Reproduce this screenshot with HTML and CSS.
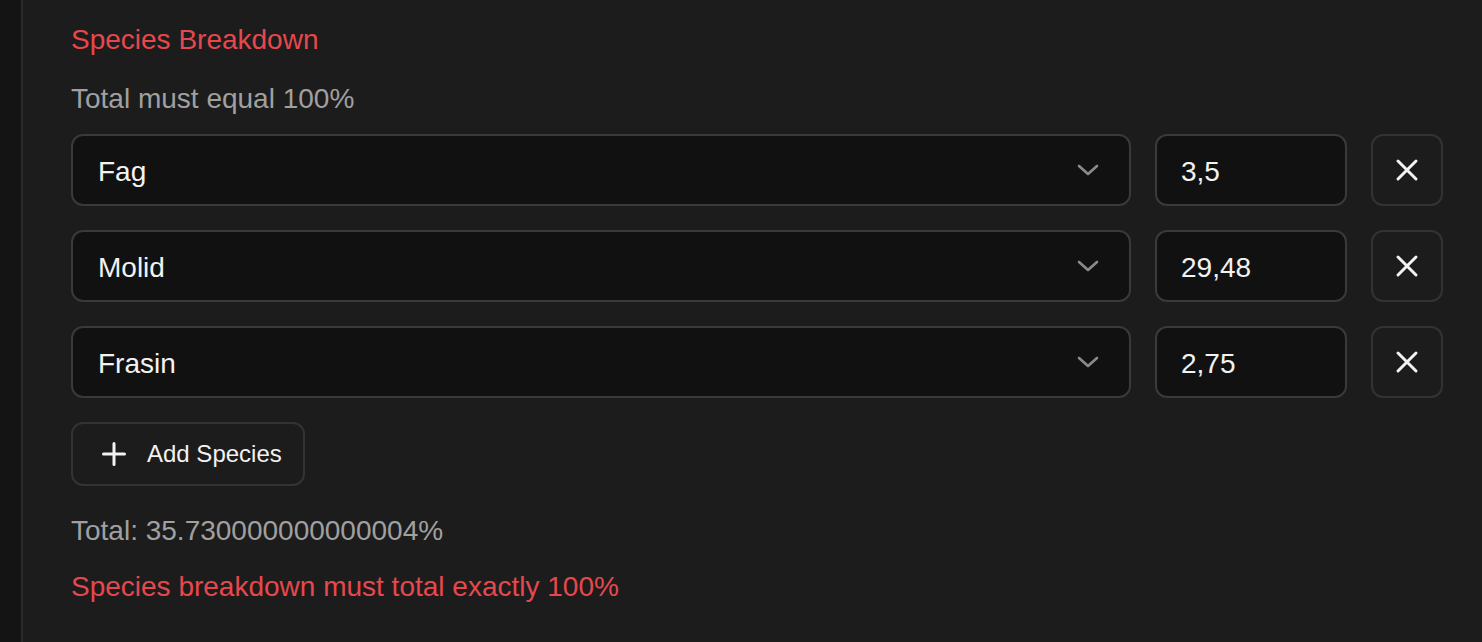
FILE: index.html
```html
<!DOCTYPE html>
<html lang="en">
<head>
<meta charset="utf-8">
<title>Species Breakdown</title>
<link rel="stylesheet" href="styles.css">
</head>
<body>
<div class="layout">
  <aside class="rail"></aside>
  <main class="panel">
    <h2 class="title">Species Breakdown</h2>
    <p class="hint">Total must equal 100%</p>
    <div class="rows">
      <div class="row">
        <div class="select"><span>Fag</span>
          <svg class="chev" width="22" height="12" viewBox="0 0 22 12"><path d="M2 2 L11 10 L20 2" fill="none" stroke="currentColor" stroke-width="2.6" stroke-linecap="round" stroke-linejoin="round"/></svg>
        </div>
        <div class="num">3,5</div>
        <button class="remove" type="button"><svg width="24" height="24" viewBox="0 0 24 24"><path d="M3 3 L21 21 M21 3 L3 21" fill="none" stroke="currentColor" stroke-width="3" stroke-linecap="round"/></svg></button>
      </div>
      <div class="row">
        <div class="select"><span>Molid</span>
          <svg class="chev" width="22" height="12" viewBox="0 0 22 12"><path d="M2 2 L11 10 L20 2" fill="none" stroke="currentColor" stroke-width="2.6" stroke-linecap="round" stroke-linejoin="round"/></svg>
        </div>
        <div class="num">29,48</div>
        <button class="remove" type="button"><svg width="24" height="24" viewBox="0 0 24 24"><path d="M3 3 L21 21 M21 3 L3 21" fill="none" stroke="currentColor" stroke-width="3" stroke-linecap="round"/></svg></button>
      </div>
      <div class="row">
        <div class="select"><span>Frasin</span>
          <svg class="chev" width="22" height="12" viewBox="0 0 22 12"><path d="M2 2 L11 10 L20 2" fill="none" stroke="currentColor" stroke-width="2.6" stroke-linecap="round" stroke-linejoin="round"/></svg>
        </div>
        <div class="num">2,75</div>
        <button class="remove" type="button"><svg width="24" height="24" viewBox="0 0 24 24"><path d="M3 3 L21 21 M21 3 L3 21" fill="none" stroke="currentColor" stroke-width="3" stroke-linecap="round"/></svg></button>
      </div>
    </div>
    <button class="add" type="button">
      <svg width="24" height="24" viewBox="0 0 24 24"><path d="M12 1.5 V22.5 M1.5 12 H22.5" fill="none" stroke="currentColor" stroke-width="3" stroke-linecap="round"/></svg>
      <span>Add Species</span>
    </button>
    <p class="total">Total: 35.730000000000004%</p>
    <p class="error">Species breakdown must total exactly 100%</p>
  </main>
</div>
</body>
</html>
```
FILE: styles.css
```css
* { box-sizing: border-box; }
html, body {
  margin: 0;
  height: 100%;
  background: #1c1c1c;
  font-family: "Liberation Sans", Arial, Helvetica, sans-serif;
  overflow: hidden;
}
.layout {
  display: flex;
  height: 100%;
}
.rail {
  width: 23px;
  flex: 0 0 23px;
  background: #141414;
  border-right: 2px solid #2a2a2a;
}
.panel {
  flex: 1;
  padding: 20px 39px 0 48px;
}
.title {
  margin: 0;
  font-size: 28px;
  line-height: 40px;
  font-weight: 400;
  color: #e5484d;
}
.hint {
  margin: 19px 0 0;
  font-size: 28px;
  line-height: 40px;
  color: #a0a0a0;
}
.rows {
  margin-top: 15px;
  display: flex;
  flex-direction: column;
  gap: 24px;
}
.row {
  display: grid;
  grid-template-columns: 1fr 192px 72px;
  gap: 24px;
  height: 72px;
}
.select, .num {
  display: flex;
  align-items: center;
  background: #111111;
  border: 2px solid #3a3a3a;
  border-radius: 12px;
  padding: 3px 24px 0 25px;
  font-size: 28px;
  color: #f2f2f2;
}
.select {
  justify-content: space-between;
  padding-right: 30px;
}
.chev { color: #8c8c8c; display: block; margin-top: -3px; }
.num { padding-left: 24px; }
.remove {
  display: flex;
  align-items: center;
  justify-content: center;
  background: #1c1c1c;
  border: 2px solid #333333;
  border-radius: 12px;
  color: #f2f2f2;
  padding: 0;
}
.remove svg { display: block; }
.add {
  margin-top: 24px;
  display: flex;
  align-items: center;
  gap: 21px;
  height: 64px;
  width: 234px;
  padding: 0 0 0 29px;
  background: #1c1c1c;
  border: 2px solid #333333;
  border-radius: 12px;
  color: #f2f2f2;
  font-family: inherit;
  font-size: 24px;
}
.add svg { display: block; }
.total {
  margin: 25px 0 0;
  font-size: 28px;
  line-height: 40px;
  color: #a0a0a0;
}
.error {
  margin: 16px 0 0;
  font-size: 28px;
  line-height: 40px;
  color: #e5484d;
}
```
